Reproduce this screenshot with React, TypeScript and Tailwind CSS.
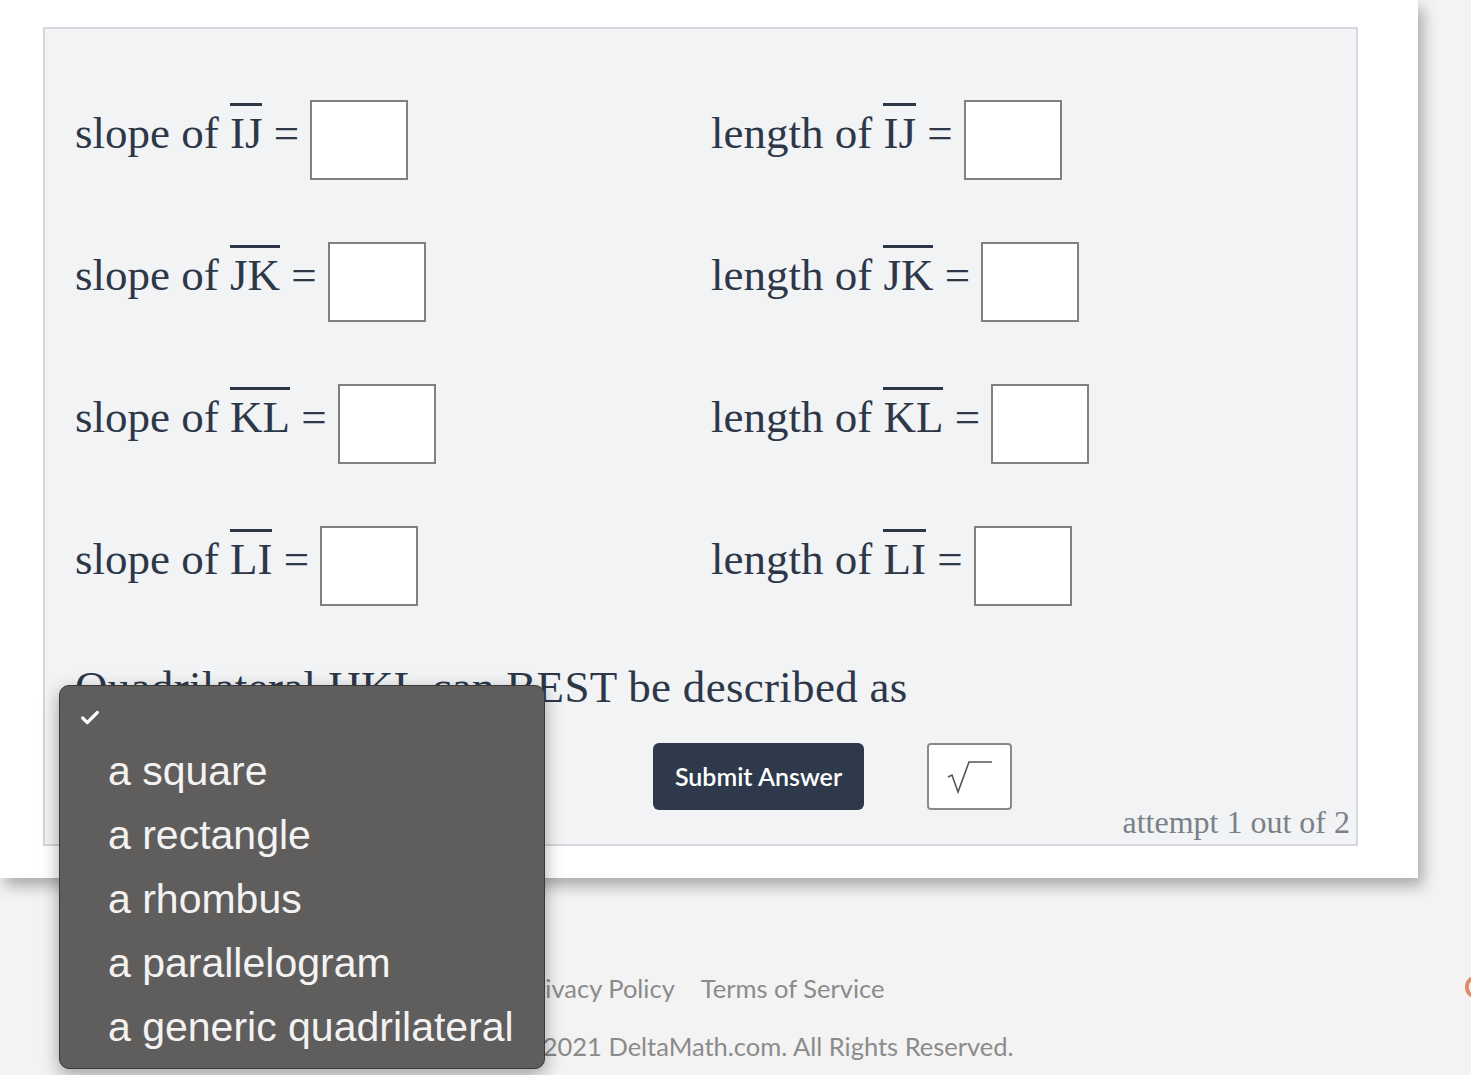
import { Check } from 'lucide-react';

const serif = { fontFamily: '"Liberation Serif", "Times New Roman", serif' };
const lato = { fontFamily: 'Lato, "Open Sans", sans-serif' };
const menuFont = { fontFamily: '"Liberation Sans", Arial, sans-serif' };

const segments = ['IJ', 'JK', 'KL', 'LI'];

const options = ['a square', 'a rectangle', 'a rhombus', 'a parallelogram', 'a generic quadrilateral'];

function Segment({ label }: { label: string }) {
  return (
    <span className="inline-block border-t-[3px] border-[#2d3748] leading-none pt-[5px]">{label}</span>
  );
}

function Field({ prefix, seg }: { prefix: string; seg: string }) {
  return (
    <div className="flex items-center h-[80px] text-[45px] text-[#2d3748]" style={serif}>
      <span className="pb-[12px] whitespace-pre">
        {prefix} <Segment label={seg} /> ={' '}
      </span>
      <div className="w-[98px] h-[80px] bg-white border-2 border-[#808080]" />
    </div>
  );
}

export default function App() {
  return (
    <div className="relative min-h-screen h-[1075px] bg-[#f3f3f3] overflow-hidden">
      {/* question card */}
      <div className="w-[1418px] h-[878px] bg-white pt-[27px] pl-[43px] shadow-[5px_8px_14px_rgba(0,0,0,0.3)]">
        <div className="w-[1315px] h-[819px] bg-[#f2f3f5] border-2 border-[#d4d7db] pl-[30px] pt-[71px] pr-[6px] flex flex-col">
          <div className="grid grid-cols-[636px_1fr] gap-y-[62px]">
            {segments.map((s) => [
              <Field key={s + '-slope'} prefix="slope of" seg={s} />,
              <Field key={s + '-length'} prefix="length of" seg={s} />,
            ])}
          </div>

          <p className="mt-[55px] text-[45px] leading-[52px] tracking-[0.3px] text-[#2d3748]" style={serif}>
            Quadrilateral IJKL can BEST be described as
          </p>

          <div className="mt-[30px] flex items-center h-[67px]">
            <div className="w-[470px] h-[50px] bg-white border border-[#999] rounded" />
            <button
              className="ml-[108px] w-[211px] h-[67px] bg-[#2e3a4c] rounded-md text-white text-[25px] font-semibold"
              style={lato}
            >
              Submit Answer
            </button>
            <div className="ml-[63px] w-[85px] h-[67px] bg-white border-2 border-[#8a8a8a] rounded-[4px] flex items-center justify-center">
              <svg width="46" height="34" viewBox="0 0 46 34" fill="none">
                <path d="M1 17 L5 15 L11 32 L22 2 L45 2" stroke="#555" strokeWidth="1.6" strokeLinejoin="miter" />
              </svg>
            </div>
          </div>

          <div className="flex justify-end mt-[-4px]">
            <span className="text-[32px] leading-[32px] text-[#7b8088]" style={serif}>
              attempt 1 out of 2
            </span>
          </div>
        </div>
      </div>

      {/* footer */}
      <footer className="pl-[515px] pt-[92px] text-[25.5px] text-[#8b8b8b]" style={lato}>
        <div className="flex gap-[26px] ml-[6px] leading-[36px]">
          <span>Privacy Policy</span>
          <span>Terms of Service</span>
        </div>
        <div className="mt-[22px] leading-[36px]">© 2021 DeltaMath.com. All Rights Reserved.</div>
      </footer>

      <span className="absolute right-[-14px] top-[976px] w-[20px] h-[22px] rounded-full border-[4px] border-[#e38a6a]" />

      {/* open select menu */}
      <div
        className="absolute left-[59px] top-[685px] w-[486px] h-[384px] bg-[#605d5d] border border-[#3b3939] rounded-[10px] shadow-[0_6px_18px_rgba(0,0,0,0.35)] overflow-hidden text-[#f3f3f3]"
        style={menuFont}
      >
        <div className="h-[54px] pt-[21px] pl-[19px]">
          <Check size={22} strokeWidth={3.5} className="text-white" />
        </div>
        {options.map((o) => (
          <div key={o} className="h-[64px] flex items-center pl-[48px] text-[41px]">
            {o}
          </div>
        ))}
      </div>
    </div>
  );
}
